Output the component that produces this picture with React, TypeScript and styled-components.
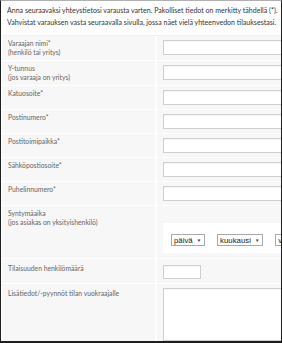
import React from "react";
import styled, { createGlobalStyle } from "styled-components";

const Global = createGlobalStyle`
  html, body { margin: 0; padding: 0; background: #fff; overflow: hidden; }
  * { box-sizing: border-box; }
`;

const Frame = styled.div`
  width: 282px;
  height: 343px;
  border: 1px solid #1e1e1e;
  border-top-color: #b0b0b0;
  border-bottom-width: 2px;
  overflow: hidden;
  background: #fff;
  font-family: Lato, "Open Sans", sans-serif;
`;

const Intro = styled.p`
  margin: 0;
  padding: 4px 0 0 6px;
  font-size: 7.05px;
  line-height: 12px;
  color: #333;
  white-space: nowrap;
`;

const Table = styled.div`
  margin: 6px 0 0 1px;
  display: grid;
  grid-template-columns: 153px 170px;
  column-gap: 2px;
  row-gap: 1px;
  border-top: 1px solid #f0f0f0;
  background: #fff;
`;

const LabelCell = styled.div<{ $top?: number }>`
  background: #f7f7f7;
  padding: ${(p) => p.$top ?? 3}px 6px 3px;
  font-size: 6.8px;
  line-height: 9px;
  color: #666;
  white-space: nowrap;
`;

const FieldCell = styled.div<{ $pad?: number; $bottom?: number }>`
  background: #f7f7f7;
  padding: ${(p) => p.$pad ?? 4}px 0 ${(p) => p.$bottom ?? 4}px 6px;
`;

const TextInput = styled.div<{ $w?: number; $h?: number }>`
  width: ${(p) => p.$w ?? 160}px;
  height: ${(p) => p.$h ?? 15}px;
  background: #fff;
  border: 1px solid #cfcfcf;
  box-shadow: inset 0 1px 1px rgba(0, 0, 0, 0.04);
`;

const DateBox = styled.div`
  background: #fff;
  margin-top: 13px;
  padding: 11px 8px 7px;
  display: flex;
  gap: 12px;
  width: 170px;
`;

const Select = styled.div`
  height: 12px;
  display: flex;
  align-items: center;
  gap: 4px;
  padding: 0 3px 0 2px;
  border: 1px solid #a9a9a9;
  background: #fff;
  font-family: "Liberation Sans", Arial, sans-serif;
  font-size: 7.8px;
  color: #222;
  flex-shrink: 0;
  white-space: nowrap;
`;

const Caret = styled.span`
  font-size: 4.5px;
  color: #333;
`;

type Row = { label: string; sub?: string; kind?: "text" | "date" | "small" | "area" };

const rows: Row[] = [
  { label: "Varaajan nimi*", sub: "(henkilö tai yritys)" },
  { label: "Y-tunnus", sub: "(jos varaaja on yritys)" },
  { label: "Katuosoite*" },
  { label: "Postinumero*" },
  { label: "Postitoimipaikka*" },
  { label: "Sähköpostiosoite*" },
  { label: "Puhelinnumero*" },
  { label: "Syntymäaika", sub: "(jos asiakas on yksityishenkilö)", kind: "date" },
  { label: "Tilaisuuden henkilömäärä", kind: "small" },
  { label: "Lisätiedot/-pyynnöt tilan vuokraajalle", kind: "area" },
];

function Field({ kind }: { kind?: Row["kind"] }) {
  if (kind === "date") {
    return (
      <FieldCell $bottom={5}>
        <DateBox>
          <Select>
            päivä <Caret>▼</Caret>
          </Select>
          <Select>
            kuukausi <Caret>▼</Caret>
          </Select>
          <Select>
            vuosi <Caret>▼</Caret>
          </Select>
        </DateBox>
      </FieldCell>
    );
  }
  if (kind === "small") {
    return (
      <FieldCell $pad={6}>
        <TextInput $w={38} $h={14} />
      </FieldCell>
    );
  }
  if (kind === "area") {
    return (
      <FieldCell>
        <TextInput $h={53} />
      </FieldCell>
    );
  }
  return (
    <FieldCell>
      <TextInput />
    </FieldCell>
  );
}

export default function App() {
  return (
    <Frame>
      <Global />
      <Intro>
        Anna seuraavaksi yhteystietosi varausta varten. Pakolliset tiedot on merkitty tähdellä (*).
        <br />
        Vahvistat varauksen vasta seuraavalla sivulla, jossa näet vielä yhteenvedon tilauksestasi.
      </Intro>
      <Table>
        {rows.map((r) => (
          <React.Fragment key={r.label}>
            <LabelCell $top={r.kind === "small" || r.kind === "area" ? 5 : 3}>
              {r.label}
              {r.sub && (
                <>
                  <br />
                  {r.sub}
                </>
              )}
            </LabelCell>
            <Field kind={r.kind} />
          </React.Fragment>
        ))}
      </Table>
    </Frame>
  );
}
